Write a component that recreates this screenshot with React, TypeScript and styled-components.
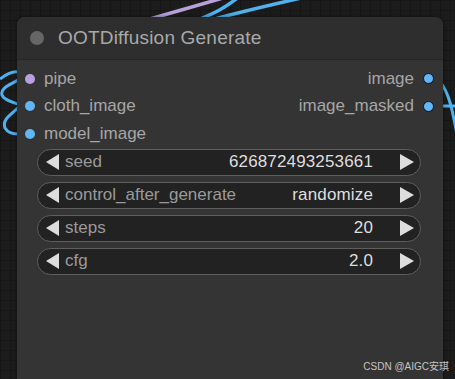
import styled, { createGlobalStyle } from 'styled-components';

const Global = createGlobalStyle`
  html, body { margin: 0; padding: 0; background: #1b1b1b; }
  body { font-family: "Liberation Sans", Arial, sans-serif; }
`;

const Canvas = styled.div`
  position: relative;
  width: 455px;
  height: 379px;
  overflow: hidden;
  background-color: #1c1c1c;
  background-image:
    linear-gradient(#161616 1px, transparent 1px),
    linear-gradient(90deg, #161616 1px, transparent 1px);
  background-size: 10px 10px;
  padding: 17px 0 0 17px;
  box-sizing: border-box;
`;

const Wires = styled.svg`
  position: absolute;
  inset: 0;
  pointer-events: none;
`;

const Node = styled.div`
  position: relative;
  width: 426px;
  height: 380px;
  background: #343434;
  border-radius: 8px 8px 0 0;
  box-shadow: 0 0 4px rgba(0, 0, 0, 0.5);
`;

const Title = styled.div`
  height: 42px;
  display: flex;
  align-items: center;
  gap: 14px;
  padding-left: 13px;
  background: #2e2e2e;
  border-bottom: 1px solid #272727;
  border-radius: 8px 8px 0 0;
  color: #a9a9a9;
  font-size: 19px;
  letter-spacing: 0.2px;
`;

const TitleDot = styled.span`
  width: 14px;
  height: 14px;
  border-radius: 50%;
  background: #666;
`;

const Slots = styled.div`
  display: grid;
  grid-template-columns: 1fr auto;
  grid-auto-rows: 27.5px;
  padding-top: 5px;
`;

const Slot = styled.div<{ $right?: boolean }>`
  display: flex;
  align-items: center;
  gap: 9px;
  font-size: 17px;
  color: #a6a6a6;
  justify-content: ${p => (p.$right ? 'flex-end' : 'flex-start')};
  padding: ${p => (p.$right ? '0 9px 0 0' : '0 0 0 8px')};
`;

const Dot = styled.span<{ $color: string; $out?: boolean }>`
  width: ${p => (p.$out ? 9 : 10)}px;
  height: ${p => (p.$out ? 9 : 10)}px;
  border-radius: 50%;
  background: ${p => p.$color};
  border: ${p => (p.$out ? '1.5px solid #111' : 'none')};
`;

const Widgets = styled.div`
  display: flex;
  flex-direction: column;
  gap: 6px;
  padding: 1px 22px 0 20px;
`;

const Widget = styled.div`
  height: 27px;
  box-sizing: border-box;
  display: flex;
  align-items: center;
  background: #222;
  border: 1px solid #5e5e5e;
  border-radius: 14px;
  padding: 0 6px 0 8px;
  font-size: 17px;
`;

const Arrow = styled.span<{ $dir: 'l' | 'r' }>`
  width: 0;
  height: 0;
  border-top: 8px solid transparent;
  border-bottom: 8px solid transparent;
  ${p =>
    p.$dir === 'l'
      ? 'border-right: 13px solid #ddd; margin-right: 6px;'
      : 'border-left: 14px solid #ddd; margin-left: 27px;'}
`;

const Label = styled.span`
  color: #9a9a9a;
  flex: 1;
`;

const Value = styled.span`
  color: #dedede;
  letter-spacing: 0.15px;
`;

const Watermark = styled.div`
  position: absolute;
  right: 6px;
  bottom: 6px;
  font-size: 10px;
  color: #c4c4c4;
  font-family: "Liberation Sans", "Noto Sans CJK SC", sans-serif;
`;

const widgets = [
  ['seed', '626872493253661'],
  ['control_after_generate', 'randomize'],
  ['steps', '20'],
  ['cfg', '2.0'],
];

export default function App() {
  return (
    <>
      <Global />
      <Canvas>
        <Wires width="455" height="379">
          <path d="M150 19 C 170 13, 195 6, 230 -4" stroke="#b9a0dd" strokeWidth="3.5" fill="none" />
          <path d="M200 19 C 215 13, 225 8, 240 -4" stroke="#4fb2ee" strokeWidth="3.5" fill="none" />
          <path d="M215 19 C 240 12, 270 5, 310 -4" stroke="#4fb2ee" strokeWidth="3.5" fill="none" />
          <path d="M0 79 C 8 73, 13 71, 18 72" stroke="#4fb2ee" strokeWidth="3" fill="none" />
          <path d="M18 80 C 10 85, 0 88, 2 95 C 4 100, 12 102, 18 104" stroke="#4fb2ee" strokeWidth="3" fill="none" />
          <path d="M18 108 C 10 115, 2 120, 5 128 C 8 133, 14 134, 18 134" stroke="#4fb2ee" strokeWidth="3" fill="none" />
          <path d="M440 82 C 449 92, 453 112, 458 140" stroke="#4fb2ee" strokeWidth="3" fill="none" />
          <path d="M440 106 L 460 106" stroke="#4fb2ee" strokeWidth="3" fill="none" />
        </Wires>
        <Node>
          <Title>
            <TitleDot />
            OOTDiffusion Generate
          </Title>
          <Slots>
            <Slot><Dot $color="#b8a1df" />pipe</Slot>
            <Slot $right>image<Dot $color="#64b5f6" $out /></Slot>
            <Slot><Dot $color="#64b5f6" />cloth_image</Slot>
            <Slot $right>image_masked<Dot $color="#64b5f6" $out /></Slot>
            <Slot><Dot $color="#64b5f6" />model_image</Slot>
          </Slots>
          <Widgets>
            {widgets.map(([k, v]) => (
              <Widget key={k}>
                <Arrow $dir="l" />
                <Label>{k}</Label>
                <Value>{v}</Value>
                <Arrow $dir="r" />
              </Widget>
            ))}
          </Widgets>
        </Node>
        <Watermark>CSDN @AIGC安琪</Watermark>
      </Canvas>
    </>
  );
}
